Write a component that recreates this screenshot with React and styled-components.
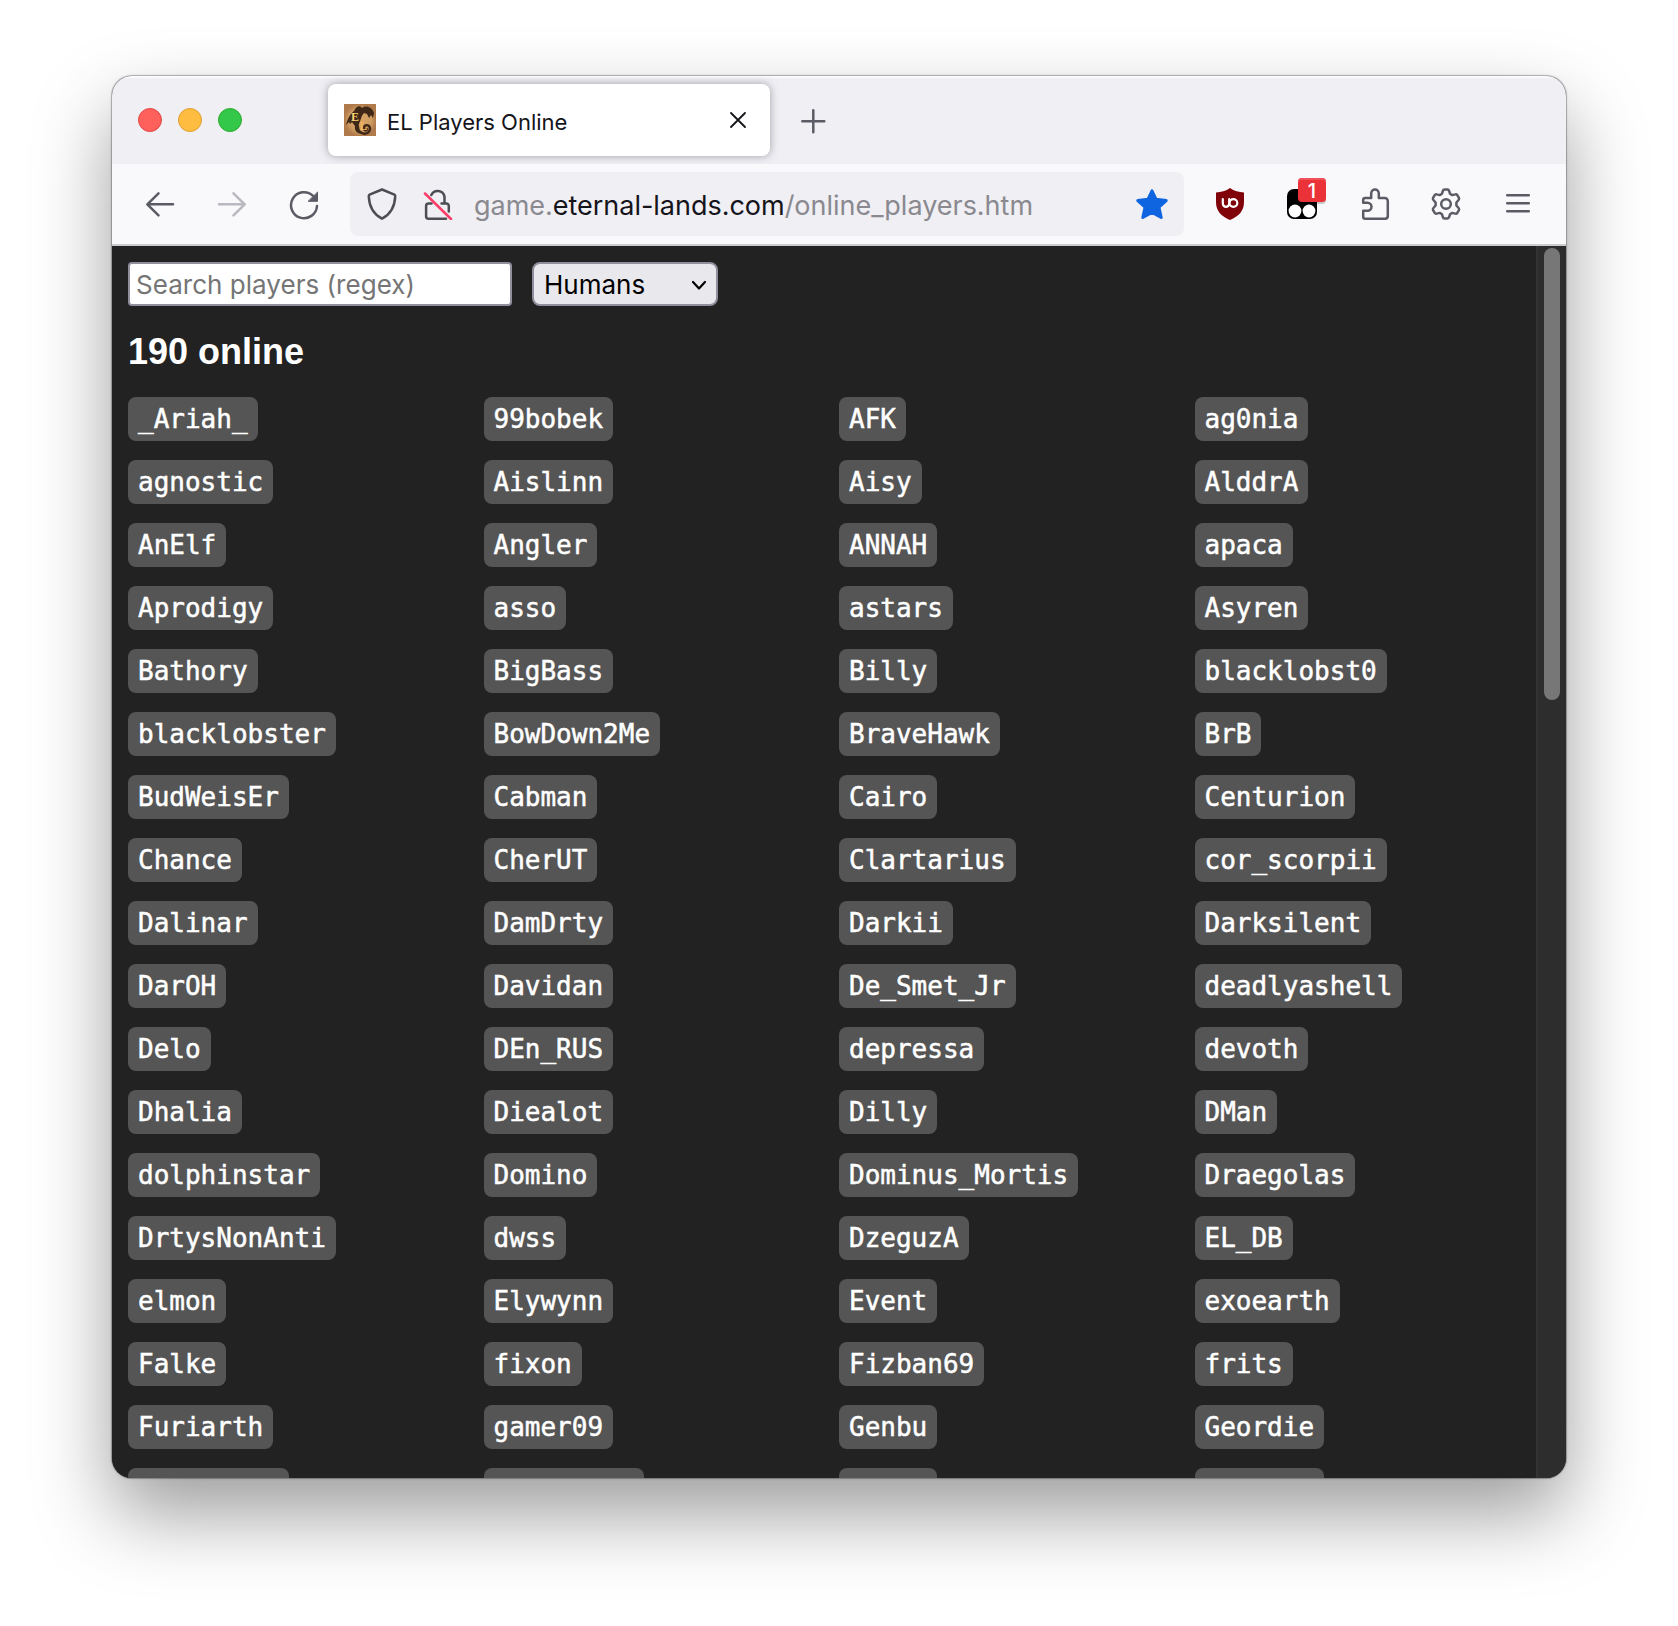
import React from "react";
import styled, { createGlobalStyle } from "styled-components";

const UI_FONT = `Inter, "Open Sans", "Liberation Sans", sans-serif`;

const GlobalStyle = createGlobalStyle`
  *, *::before, *::after { box-sizing: border-box; }
  html, body { margin: 0; background: #fff; overflow: hidden; }
`;

const Desktop = styled.div`
  width: 1678px;
  height: 1626px;
  padding: 76px 112px 148px;
  background: #fff;
  overflow: hidden;
`;

const Window = styled.div`
  display: flex;
  flex-direction: column;
  width: 1454px;
  height: 1402px;
  border-radius: 20px;
  overflow: hidden;
  background: #222;
  box-shadow: 0 0 0 1px rgba(0, 0, 0, 0.2), 0 0 3px rgba(0, 0, 0, 0.25),
    0 36px 78px rgba(0, 0, 0, 0.39);
`;

const TabBar = styled.div`
  display: flex;
  flex: none;
  height: 88px;
  padding: 8px 0 0 26px;
  background: #f0eff4;
  box-shadow: inset 0 2px 1px rgba(255, 255, 255, 0.75);
`;

const TrafficLights = styled.div`
  display: flex;
  gap: 16px;
  width: 190px;
  padding-top: 24px;
`;

const Light = styled.span`
  width: 24px;
  height: 24px;
  border-radius: 50%;
  background: ${(p) => p.$color};
  border: 1px solid ${(p) => p.$edge};
`;

const Tab = styled.div`
  display: flex;
  align-items: center;
  width: 442px;
  height: 72px;
  padding: 0 24px 0 16px;
  border-radius: 8px;
  background: #fff;
  box-shadow: 0 0 8px rgba(80, 80, 90, 0.5);
`;

const TabTitle = styled.span`
  flex: 1;
  padding: 4px 0 0 11px;
  font: 400 22px/30px ${UI_FONT};
  color: #15141a;
  white-space: nowrap;
`;

const NewTab = styled.div`
  padding: 21px 0 0 27px;
`;

const Toolbar = styled.div`
  display: flex;
  align-items: center;
  flex: none;
  height: 82px;
  padding: 0 32px;
  background: #f9f9fb;
  border-bottom: 2px solid #cccccc;
`;

const NavButtons = styled.div`
  display: flex;
  gap: 40px;
  width: 206px;
`;

const Glyph = styled.svg`
  display: block;
  flex: none;
  width: ${(p) => p.$size || 32}px;
  height: ${(p) => p.$size || 32}px;
  fill: none;
  stroke: ${(p) => p.$color || "#5b5b66"};
  stroke-width: ${(p) => p.$weight || 2.5};
  stroke-linecap: round;
  stroke-linejoin: round;
  opacity: ${(p) => p.$opacity || 1};
`;

const UrlBar = styled.div`
  display: flex;
  align-items: center;
  width: 834px;
  height: 64px;
  padding: 0 16px;
  border-radius: 8px;
  background: #f0eff4;
`;

const SiteIcons = styled.div`
  display: flex;
  gap: 24px;
  width: 108px;
`;

const Url = styled.div`
  flex: 1;
  padding-top: 4px;
  font: 400 27px/36px ${UI_FONT};
  letter-spacing: -0.02px;
  color: #8a898f;
  white-space: nowrap;
`;

const Host = styled.span`
  color: #15141a;
`;

const Extensions = styled.div`
  display: flex;
  gap: 40px;
  padding-left: 30px;
`;

const BadgeAnchor = styled.div`
  position: relative;
`;

const Badge = styled.span`
  position: absolute;
  left: 12px;
  top: -10px;
  width: 28px;
  height: 24px;
  border-radius: 4px;
  background: #ec3239;
  box-shadow: inset 0 2px 0 #f05158, 0 2px 0 rgba(0, 0, 0, 0.2);
  color: #fff;
  font: 500 20px/26px ${UI_FONT};
  text-align: center;
`;

const Viewport = styled.div`
  display: flex;
  flex: 1;
  min-height: 0;
`;

const Page = styled.main`
  flex: 1;
  padding: 16px 0 0 16px;
  overflow: hidden;
  background: #222;
`;

const Filters = styled.div`
  display: flex;
  gap: 20px;
`;

const SearchBox = styled.input`
  width: 384px;
  height: 44px;
  margin: 0;
  padding: 1px 6px 0;
  border: 2px solid #8f8f9d;
  border-radius: 4px;
  outline: none;
  background: #fff;
  font: 400 26px/36px ${UI_FONT};
  letter-spacing: 0.03px;
  &::placeholder {
    color: #757575;
    opacity: 1;
  }
`;

const KindSelect = styled.div`
  display: flex;
  align-items: center;
  justify-content: space-between;
  width: 186px;
  height: 44px;
  padding: 1px 9px 0 10px;
  border: 2px solid #8f8f9d;
  border-radius: 8px;
  background: #e9e9ed;
  color: #000;
  font: 400 26px/37px ${UI_FONT};
`;

const Count = styled.h1`
  margin: 25px 0 0;
  font: 700 36px/42px "Liberation Sans", Arial, sans-serif;
  color: #fff;
`;

const Players = styled.div`
  display: grid;
  grid-template-columns: repeat(4, 355.5px);
  grid-auto-rows: 44px;
  row-gap: 19px;
  justify-items: start;
  margin-top: 24px;
`;

const Player = styled.code`
  height: 44px;
  padding: 0 10px;
  border-radius: 8px;
  background: #555;
  color: #fff;
  font: 400 26px/45px "DejaVu Sans Mono", monospace;
  -webkit-text-stroke: 0.5px #fff;
  white-space: nowrap;
  ${(p) => p.$chars && `width: calc(${p.$chars}ch + 20px);`}
`;

const Scrollbar = styled.div`
  flex: none;
  width: 30px;
  padding: 2px 0 0 6px;
  border-left: 2px solid #333;
  background: #2d2d2d;
`;

const Thumb = styled.div`
  width: 16px;
  height: 452px;
  border-radius: 8px;
  background: #777;
`;

const Favicon = () => (
  <Glyph viewBox="0 0 32 32" $color="none">
    <defs>
      <radialGradient id="parchment">
        <stop offset="0" stopColor="#dca565" />
        <stop offset="0.7" stopColor="#cf9c62" />
        <stop offset="1" stopColor="#b07a4a" />
      </radialGradient>
    </defs>
    <rect width="32" height="32" fill="url(#parchment)" />
    <path
      d="M2 21C4 14 6 10 10 7C12 2 16 1 18 4C22 1 28 3 30 9L29 14L27 11L25 14L23 10L20 9C17 12 17 16 15 20C14 24 15 27 20 29C15 31 10 28 11 22L8 18L6 20L5 18Z"
      fill="#3f2818"
    />
    <path
      d="M14 23C14 31 25 32 26 25C26 20 20 20 20 24C20 27 23 27 23 25"
      stroke="#3f2818"
      strokeWidth="2.4"
    />
    <text x="7" y="17" fontFamily="Liberation Serif, serif" fontWeight="700" fontSize="12" fill="#fbd272">
      E
    </text>
    <text x="15.500" y="26" fontFamily="Liberation Serif, serif" fontWeight="700" fontSize="12" fill="#efb55c">
      L
    </text>
  </Glyph>
);

const BackIcon = () => (
  <Glyph viewBox="0 0 32 32">
    <path d="M29 16.300H3.500M14.500 5.300L3.300 16.300l11.200 11" />
  </Glyph>
);

const ForwardIcon = () => (
  <Glyph viewBox="0 0 32 32" $opacity={0.4}>
    <path d="M3 16.300h25.500M17.500 5.300l11.200 11-11.200 11" />
  </Glyph>
);

const ReloadIcon = () => (
  <Glyph viewBox="0 0 32 32">
    <path d="M29 18A13 13 0 1 1 25 7.800" />
    <path d="M29.500 4.500v8.800h-9z" fill="#5b5b66" strokeWidth="1" />
  </Glyph>
);

const ShieldIcon = () => (
  <Glyph viewBox="0 0 32 32" $color="#4e4d54">
    <path d="M16 1.500L28.400 6.600Q29.300 7 29.200 8.500C28.800 19 25 26 16 30.700C7 26 3.200 19 2.800 8.500Q2.700 7 3.600 6.600Z" />
  </Glyph>
);

const InsecureIcon = () => (
  <Glyph viewBox="0 0 32 32" $color="#4e4d54">
    <path d="M9.300 7a7 7 0 0 1 13.200 1.500V15.500M19.500 15.500h4.800a2.500 2.500 0 0 1 2.500 2.500v5.500M24 30.700H6.600A2.500 2.500 0 0 1 4.100 28.200V18a2.500 2.500 0 0 1 2.500-2.500H9.500" />
    <path d="M3 5.500L29 31" stroke="#fc3d68" />
  </Glyph>
);

const StarIcon = () => (
  <Glyph viewBox="0 0 32 32" $color="#0f65e0">
    <path
      d="M16 2.800L20 11.200L30.200 12.600L23 19.200L25.200 29.500L16 24.500L6.800 29.500L9 19.200L1.800 12.600L12 11.200Z"
      fill="#0f65e0"
      strokeWidth="3"
    />
  </Glyph>
);

const UblockIcon = () => (
  <Glyph viewBox="0 0 32 32" $color="none">
    <path
      d="M16 0C20 3 25 4.200 30 4.500V14C30 23 25 28 16 32C7 28 2 23 2 14V4.500C7 4.200 12 3 16 0Z"
      fill="#800309"
    />
    <path d="M8.800 11v4.600a3.200 3.200 0 0 0 6.400 0v-4.600" stroke="#fff" strokeWidth="2.200" />
    <circle cx="19.400" cy="15" r="3.900" stroke="#fff" strokeWidth="2.200" />
  </Glyph>
);

const MonkeyIcon = () => (
  <Glyph viewBox="0 0 32 32" $color="none">
    <rect x="1" y="1" width="30" height="30" rx="7" fill="#000" />
    <circle cx="9" cy="23" r="6.400" fill="#fff" />
    <circle cx="23" cy="23" r="6.400" fill="#fff" />
  </Glyph>
);

const PuzzleIcon = () => (
  <Glyph viewBox="0 0 32 32">
    <path d="M5.200 14.800V12a2 2 0 0 1 2-2h6V5.200a3.800 3.800 0 0 1 7.600 0V10h6a3 3 0 0 1 3 3V28a2.700 2.700 0 0 1-2.700 2.700H7.200a2 2 0 0 1-2-2V22.800H9.500a4 4 0 0 0 0-8Z" />
  </Glyph>
);

const GearIcon = () => (
  <Glyph viewBox="0 0 32 32">
    <path d="M14.600 1.500h2.800a1.800 1.800 0 0 1 1.700 1.300l.9 2.900 2.300 1.400 3-.7a1.800 1.800 0 0 1 2 .8l1.600 2.700a1.800 1.800 0 0 1-.3 2.100L26.400 14.500v3l2.200 2.500a1.800 1.800 0 0 1 .3 2.100l-1.600 2.700a1.800 1.800 0 0 1-2 .8l-3-.7-2.300 1.400-.9 2.900a1.800 1.800 0 0 1-1.700 1.300h-2.800a1.800 1.800 0 0 1-1.700-1.300l-.9-2.900-2.300-1.400-3 .7a1.800 1.800 0 0 1-2-.8L3.100 22.100a1.800 1.800 0 0 1 .3-2.100l2.200-2.500v-3L3.400 12a1.800 1.800 0 0 1-.3-2.100l1.600-2.700a1.800 1.800 0 0 1 2-.8l3 .7 2.300-1.400.9-2.900a1.800 1.800 0 0 1 1.700-1.300Z" />
    <circle cx="16" cy="16" r="4.800" />
  </Glyph>
);

const MenuIcon = () => (
  <Glyph viewBox="0 0 32 32">
    <path d="M5.200 7.200h21.600M5.200 15.300h21.600M5.200 23.300h21.600" />
  </Glyph>
);

const PLAYERS = `_Ariah_ 99bobek AFK ag0nia
agnostic Aislinn Aisy AlddrA
AnElf Angler ANNAH apaca
Aprodigy asso astars Asyren
Bathory BigBass Billy blacklobst0
blacklobster BowDown2Me BraveHawk BrB
BudWeisEr Cabman Cairo Centurion
Chance CherUT Clartarius cor_scorpii
Dalinar DamDrty Darkii Darksilent
DarOH Davidan De_Smet_Jr deadlyashell
Delo DEn_RUS depressa devoth
Dhalia Diealot Dilly DMan
dolphinstar Domino Dominus_Mortis Draegolas
DrtysNonAnti dwss DzeguzA EL_DB
elmon Elywynn Event exoearth
Falke fixon Fizban69 frits
Furiarth gamer09 Genbu Geordie`.split(/\s+/);

const CLIPPED_ROW = [9, 9, 5, 7];

export default function App() {
  return (
    <Desktop>
      <GlobalStyle />
      <Window>
        <TabBar>
          <TrafficLights>
            <Light $color="#fe605c" $edge="#e14942" />
            <Light $color="#febc40" $edge="#e0a033" />
            <Light $color="#34c84a" $edge="#2dac2f" />
          </TrafficLights>
          <Tab>
            <Favicon />
            <TabTitle>EL Players Online</TabTitle>
            <Glyph viewBox="0 0 16 16" $size={16} $color="#15141a" $weight={1.8}>
              <path d="M1 1l14 14M15 1L1 15" />
            </Glyph>
          </Tab>
          <NewTab>
            <Glyph viewBox="0 0 32 32">
              <path d="M16.300 5.200v22M5.300 16.200h22" />
            </Glyph>
          </NewTab>
        </TabBar>
        <Toolbar>
          <NavButtons>
            <BackIcon />
            <ForwardIcon />
            <ReloadIcon />
          </NavButtons>
          <UrlBar>
            <SiteIcons>
              <ShieldIcon />
              <InsecureIcon />
            </SiteIcons>
            <Url>
              game.<Host>eternal-lands.com</Host>/online_players.htm
            </Url>
            <StarIcon />
          </UrlBar>
          <Extensions>
            <UblockIcon />
            <BadgeAnchor>
              <MonkeyIcon />
              <Badge>1</Badge>
            </BadgeAnchor>
            <PuzzleIcon />
            <GearIcon />
            <MenuIcon />
          </Extensions>
        </Toolbar>
        <Viewport>
          <Page>
            <Filters>
              <SearchBox placeholder="Search players (regex)" />
              <KindSelect>
                Humans
                <Glyph viewBox="0 0 16 16" $size={16} $color="#000" $weight={2.2}>
                  <path d="M2 5l6 6.500L14 5" />
                </Glyph>
              </KindSelect>
            </Filters>
            <Count>190 online</Count>
            <Players>
              {PLAYERS.map((name) => (
                <Player key={name}>{name}</Player>
              ))}
              {CLIPPED_ROW.map((chars, i) => (
                <Player key={i} $chars={chars} />
              ))}
            </Players>
          </Page>
          <Scrollbar>
            <Thumb />
          </Scrollbar>
        </Viewport>
      </Window>
    </Desktop>
  );
}
